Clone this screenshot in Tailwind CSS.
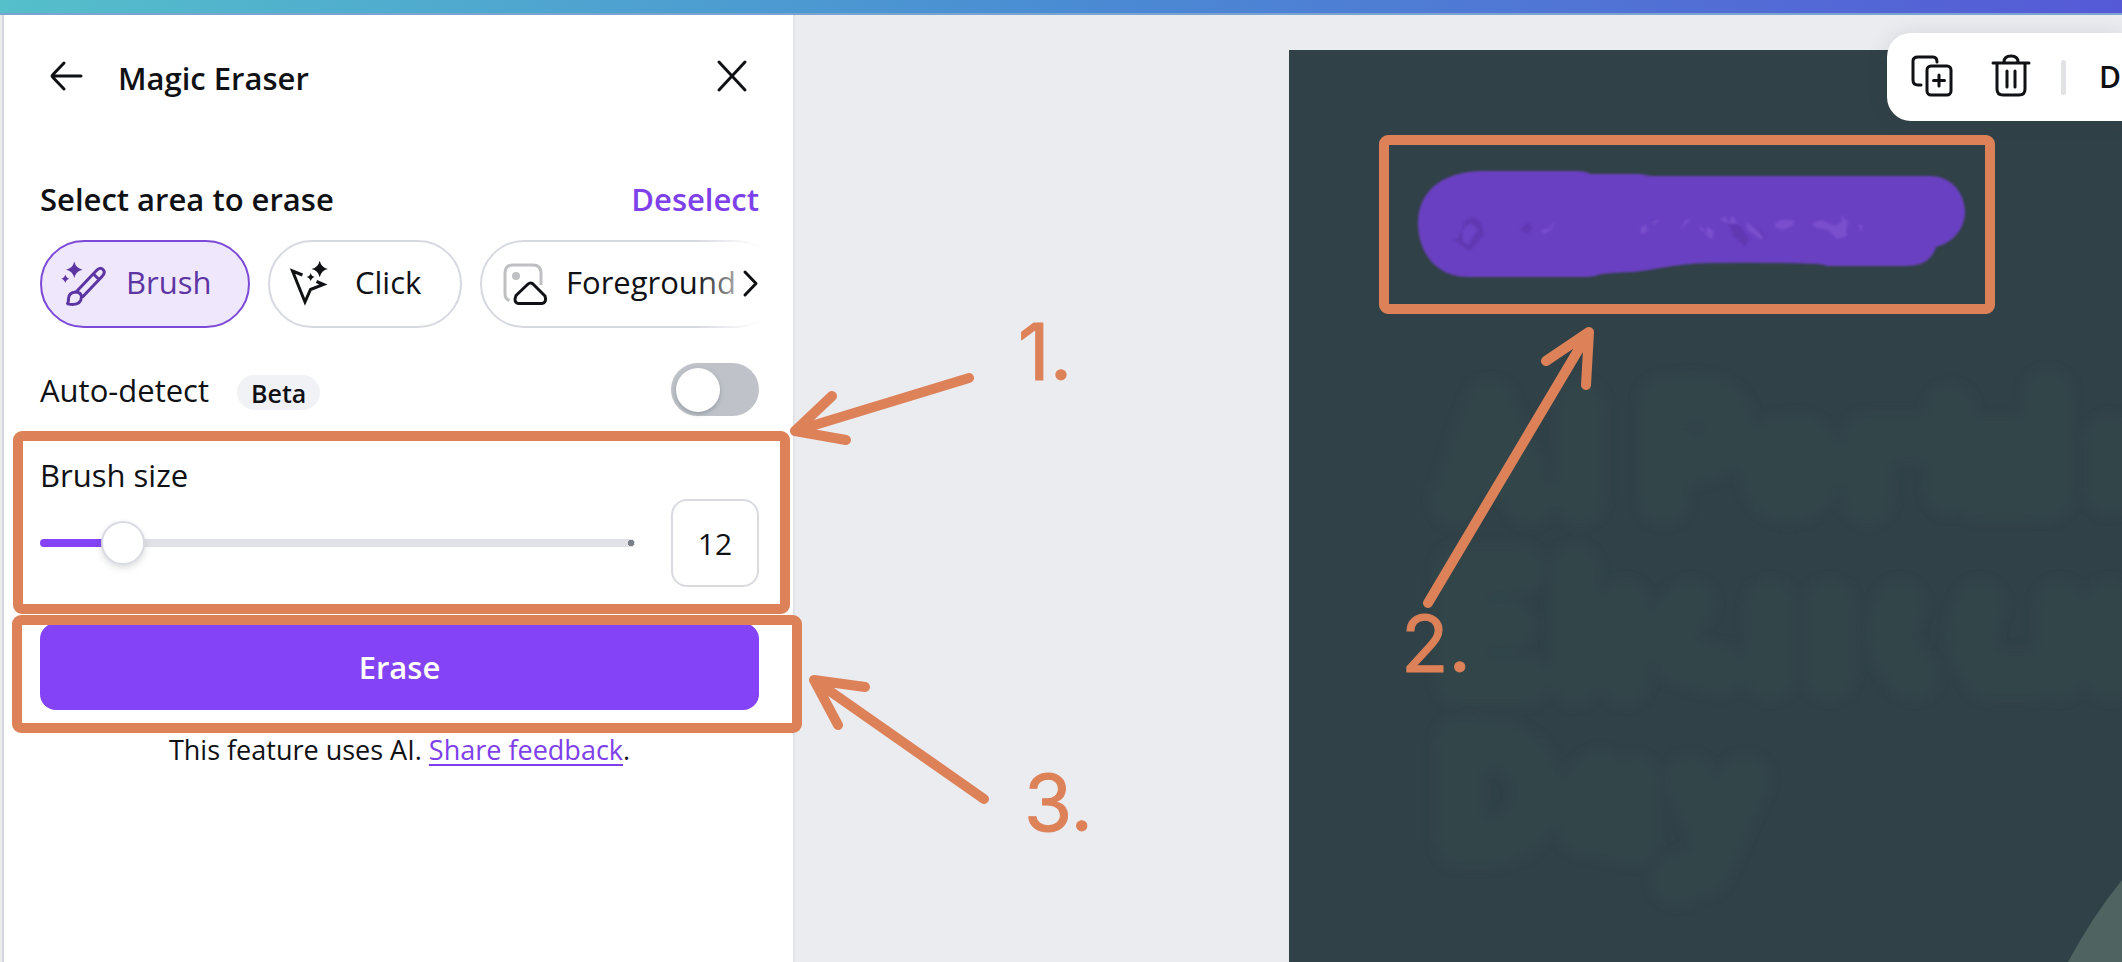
<!DOCTYPE html>
<html lang="en">
<head>
<meta charset="utf-8">
<title>Magic Eraser</title>
<script src="https://cdn.jsdelivr.net/npm/@tailwindcss/browser@4"></script>
</head>
<body class="relative flex h-screen min-h-[800px] flex-col overflow-hidden bg-[#ebecf0] font-['Open_Sans','Noto_Sans',sans-serif] text-[31px] leading-10 text-[#0f1115]">
  <div class="h-[15px] shrink-0 border-b-2 border-[#7aa3cf] bg-linear-to-r from-[#55bfca] via-[#4a8cd3] to-[#5559d6]"></div>

  <div class="flex min-h-0 flex-1">
    <aside class="ml-[2px] flex w-[793px] shrink-0 flex-col border-x-2 border-l-[#d5d8de] border-r-[#e1e3e8] bg-white pr-[34px] pl-9">
      <header class="mt-[39px] flex items-center">
        <button type="button" aria-label="Back" class="mr-6 ml-[6px] size-12">
          <svg viewBox="0 0 48 48" class="size-12" fill="none" stroke="currentColor" stroke-width="3" stroke-linecap="round" stroke-linejoin="round"><path d="M35 22H6M18 9 7 20.500q-1.500 1.500 0 3L18 35"/></svg>
        </button>
        <h1 class="font-semibold">Magic Eraser</h1>
        <button type="button" aria-label="Close" class="mr-1 ml-auto size-12">
          <svg viewBox="0 0 48 48" class="size-12" fill="none" stroke="currentColor" stroke-width="3" stroke-linecap="round"><path d="m12 8 26 28M38 8 12 36"/></svg>
        </button>
      </header>

      <div class="mt-[77px] flex justify-between font-semibold">
        <h2>Select area to erase</h2>
        <button type="button" class="text-[#7d40ea]">Deselect</button>
      </div>

      <div class="relative mt-[21px] flex gap-[18px] overflow-hidden">
        <button type="button" class="flex h-22 w-[210px] shrink-0 items-center gap-[18px] rounded-full border-2 border-[#7d4ad8] bg-[#efe8fd] pl-[18px] text-[#5d35a3]">
          <svg viewBox="0 0 48 48" class="size-12" fill="none" stroke="currentColor" stroke-width="3" stroke-linecap="round" stroke-linejoin="round"><path fill="currentColor" stroke="none" d="M14.300 1.500q1.500 6.700 8.200 8.200-6.700 1.500-8.200 8.200-1.500-6.700-8.200-8.200 6.700-1.500 8.200-8.200ZM5.300 14.500q.8 3.400 4.200 4.200-3.400.8-4.200 4.200-.8-3.400-4.200-4.200 3.400-.8 4.200-4.200Z"/><path d="m17 31 19-20q4-4.500 7-1.500t-1 7L23 36.500M34 14.500l5 5M7.500 43.500q1-1 1-5 .5-6 7-6.500 5.500 0 6 5-.5 7.500-9 7.500-4 0-5-1Z"/></svg>
          <span class="pb-1">Brush</span>
        </button>
        <button type="button" class="flex h-22 w-[194px] shrink-0 items-center gap-[18px] rounded-full border-2 border-[#d6d9df] bg-white pl-[19px]">
          <svg viewBox="0 0 48 48" class="size-12" fill="none" stroke="currentColor" stroke-width="3" stroke-linejoin="miter"><path fill="currentColor" stroke="none" d="M30.700.8q1.500 6.700 8.200 8.200-6.700 1.500-8.200 8.200-1.500-6.700-8.200-8.200 6.700-1.500 8.200-8.200ZM21.700 13q.8 3.300 4.100 4-3.300.8-4.100 4.200-.8-3.400-4.200-4.200 3.400-.7 4.200-4Z"/><path d="m13.500 15-10-4L16 42l5.500-12.500 13-5-7-3"/></svg>
          <span class="pb-1">Click</span>
        </button>
        <button type="button" class="flex h-22 w-[300px] shrink-0 items-center gap-[18px] rounded-full border-2 border-[#d6d9df] bg-white pl-[18px]">
          <svg viewBox="0 0 48 48" class="size-12 shrink-0" fill="none" stroke="currentColor" stroke-width="3" stroke-linecap="round" stroke-linejoin="round"><path stroke="#bfc0c3" stroke-linecap="butt" d="M9.500 40.500Q5 39 5 34V13q0-8 8-8h20q8 0 8 8v12"/><circle cx="16" cy="16" r="4" fill="#bfc0c3" stroke="none"/><path d="m27 25-11 10.500q-3 7.500 3 8h23q5-1 3-7.500L33 24q-3-2.500-6 1Z"/></svg>
          <span class="pb-1">Foreground</span>
        </button>
        <div class="absolute inset-y-0 right-0 flex w-16 items-center justify-end bg-linear-to-r from-white/0 to-white">
          <button type="button" aria-label="More options">
            <svg viewBox="0 0 20 48" class="h-12 w-5" fill="none" stroke="currentColor" stroke-width="3" stroke-linecap="round" stroke-linejoin="round"><path d="m6 12 11 11.500L6 35"/></svg>
          </button>
        </div>
      </div>

      <div class="mt-[35px] flex items-center">
        <label for="auto">Auto-detect</label>
        <span class="mt-[6px] ml-7 flex h-[35px] items-center rounded-full bg-[#f1f2f5] px-[14px] text-[25px] font-semibold">Beta</span>
        <input id="auto" type="checkbox" role="switch" class="ml-auto h-[53px] w-22 appearance-none rounded-full bg-[#bfc3c9] p-[5px] before:block before:size-[44px] before:rounded-full before:bg-white before:shadow-[0_2px_4px_#6b728080] before:content-['']">
      </div>

      <label for="size" class="mt-[39px]">Brush size</label>
      <div class="mt-1 flex items-center gap-9">
        <input id="size" type="range" min="1" max="100" value="12" class="h-11 min-w-0 flex-1 appearance-none bg-transparent [&::-webkit-slider-runnable-track]:h-2 [&::-webkit-slider-runnable-track]:rounded-full [&::-webkit-slider-runnable-track]:bg-[radial-gradient(circle_at_calc(100%_-_4px)_50%,#7b7f88_3px,transparent_3px),linear-gradient(to_right,#8443f7_14%,#e1e2e7_14%)] [&::-webkit-slider-thumb]:-mt-[18px] [&::-webkit-slider-thumb]:size-11 [&::-webkit-slider-thumb]:appearance-none [&::-webkit-slider-thumb]:rounded-full [&::-webkit-slider-thumb]:border-2 [&::-webkit-slider-thumb]:border-[#d9dbe2] [&::-webkit-slider-thumb]:bg-white [&::-webkit-slider-thumb]:shadow-[0_3px_6px_#40445030]">
        <input type="text" value="12" aria-label="Brush size value" class="size-22 rounded-2xl border-2 border-[#d9dbe0] bg-white text-center text-[30px]">
      </div>

      <button type="button" class="mt-9 h-[87px] rounded-2xl bg-[#8443f7] font-semibold text-white">Erase</button>
      <p class="mt-5 text-center text-[27px]">This feature uses AI. <a href="#" class="text-[#7d40ea] underline decoration-2 underline-offset-4">Share feedback</a>.</p>
    </aside>

    <main class="relative flex min-w-0 flex-1 pt-[35px] pl-[494px]">
      <div class="min-w-0 flex-1 overflow-hidden bg-[#304147]">
        <svg width="833" height="912" viewBox="1289 50 833 912" role="img" aria-label="Design canvas">
          <defs>
            <filter id="soft" x="-10%" y="-10%" width="120%" height="120%"><feGaussianBlur stdDeviation="4"/></filter>
            <filter id="edge"><feGaussianBlur stdDeviation="1"/></filter>
          </defs>
          <g fill="none" stroke="#30454a" stroke-width="54" stroke-linecap="round" stroke-linejoin="round" filter="url(#soft)">
            <path d="M1456 500 1490 405l40 95M1475 470h45M1580 405v95M1664 500v-98q70-12 64 30-6 28-44 28M1790 440q-28 0-26 30 6 34 34 26 26-14 18-44-8-16-26-12M1868 500v-62h50M1950 490v-80M1980 440h50v55h-50zM2048 395v100M2110 440v50"/>
            <path d="M1520 570h-60v110h65M1460 625h50M1575 570v110M1625 605v75M1690 605q-28 20-10 55l40 10M1770 605v70M1830 605v70M1900 605q-20 40 14 70M1980 605q-20 40 10 70h40M2060 605v70M2110 605v70"/>
            <path d="M1460 742v100h30q50-8 46-56-4-46-76-44M1600 775q-32 20-16 55l50 10v-60M1690 780l25 55M1745 780l-40 90-28 10"/>
          </g>
          <path d="M2068 962Q2092 917 2122 880v82Z" fill="#4f6460"/>
          <path filter="url(#edge)" fill="#6a40c2" d="M1484 171h94q7 0 13 3h46q7 0 13 2h280c24 0 35 20 35 36 0 15-10 30-29 35-4 12-12 19-30 19h-78q-7-2-11-2-50-2-107-1c-38 1-55 7-76 9q-25 1-32 2-9 3-16 3h-118c-34 0-50-27-50-54 0-28 20-52 66-52Z"/>
          <g filter="url(#edge)">
            <path fill="#6038b2" d="m1450 240 8-2 7-17 8-4 8 5 3 12-10 13-6 4-9-8ZM1520 230q4-6 9-7l4 6-6 5ZM1728 222l12 4 9 12-3 9-12-10ZM1754 226l10 8 2 6-9-5Z"/>
            <path fill="#6c42c6" d="m1462 230 8-7 8 6-9 15-6-2Z"/>
            <g fill="#7a50cd">
              <path d="m1540 230 9-1 6-8-4 9-7 4ZM1640 229l5-5 3 7-6 3ZM1651 223l9-4-5 5ZM1680 230l6-10 5-1-6 6ZM1699 226l6 4-3 2ZM1707 227l7 4-2 8-6-4ZM1720 220l5-4 4 7 3-7 5 6-6 2-5-2ZM1746 222l10 7 8 9-4 1-12-9ZM1774 226q4-9 21-5l-3 5-10 4Z"/>
              <path d="m1812 223 10-3 12 6 8-4-1-7 7 7-2 8 1 6-10 3-9-9-13-3ZM1858 224l5 2-2 6Z"/>
            </g>
          </g>
        </svg>
      </div>
      <div class="absolute top-[18px] right-0 flex h-22 w-[235px] items-center rounded-l-3xl bg-white shadow-[0_0_20px_#40445020]">
        <button type="button" aria-label="Duplicate" class="ml-5 size-12 shrink-0">
          <svg viewBox="0 0 48 48" class="size-12" fill="none" stroke="currentColor" stroke-width="3" stroke-linecap="round" stroke-linejoin="round"><path d="M14 32h-3q-5 0-5-5V8q0-4 5-4h15q4 0 4 5"/><rect x="20" y="13" width="24" height="29" rx="4"/><path d="M32 22v11m-5.500-5.500h11"/></svg>
        </button>
        <button type="button" aria-label="Delete" class="ml-8 size-12 shrink-0">
          <svg viewBox="0 0 48 48" class="size-12" fill="none" stroke="currentColor" stroke-width="3" stroke-linecap="round" stroke-linejoin="round"><path d="M6 10h36M10 10v26q0 6 6 6h16q6 0 6-6V10M17 9q0-6 7-6t7 6M20 18v16M28 18v16"/></svg>
        </button>
        <span class="ml-[26px] h-[35px] w-[5px] shrink-0 rounded-full bg-[#e1e2e6]"></span>
        <button type="button" class="ml-[33px] text-[30px] font-semibold">D</button>
      </div>
    </main>
  </div>

  <!-- Tutorial marks drawn over the editor -->
  <svg class="pointer-events-none absolute top-0 left-0" width="2122" height="962" viewBox="0 0 2122 962" fill="none" stroke="#dd8158" stroke-width="10" stroke-linecap="round" stroke-linejoin="round">
    <rect x="18" y="436" width="767" height="173" rx="4"/>
    <rect x="17" y="620" width="780" height="108" rx="4"/>
    <rect x="1384" y="140" width="606" height="169" rx="4"/>
    <path d="M969 378 795 431l37-35M795 431l51 9M1428 603l161-271-43 29M1589 332l-3 53M984 799 814 680l51 7M814 680l24 45"/>
    <g fill="#dd8158" stroke="#dd8158" stroke-width="1" font-family="Inter, sans-serif" font-size="78">
      <text x="1018" y="380">1.</text>
      <text x="1401" y="672">2.</text>
      <text x="1024" y="831">3.</text>
    </g>
  </svg>
</body>
</html>
